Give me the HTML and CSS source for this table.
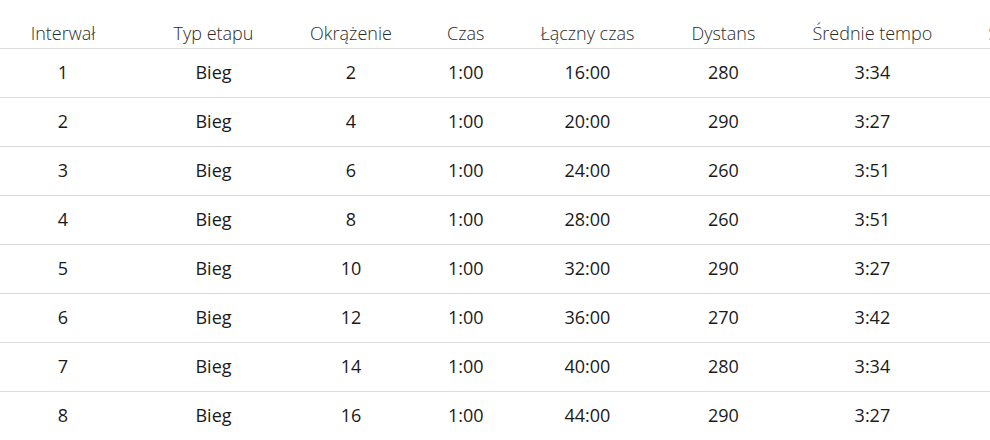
FILE: index.html
```html
<!DOCTYPE html>
<html lang="pl">
<head>
<meta charset="utf-8">
<title>Interwały</title>
<link rel="stylesheet" href="styles.css">
</head>
<body>
<div class="scroller">
<table class="laps">
  <thead>
    <tr>
      <th class="c1">Interwał</th>
      <th class="c2">Typ etapu</th>
      <th class="c3">Okrążenie</th>
      <th class="c4">Czas</th>
      <th class="c5">Łączny czas</th>
      <th class="c6">Dystans</th>
      <th class="c7">Średnie tempo</th>
      <th class="c8">Średnie tętno</th>
    </tr>
  </thead>
  <tbody>
    <tr><td>1</td><td class="type">Bieg</td><td>2</td><td>1:00</td><td>16:00</td><td>280</td><td>3:34</td><td>165</td></tr>
    <tr><td>2</td><td class="type">Bieg</td><td>4</td><td>1:00</td><td>20:00</td><td>290</td><td>3:27</td><td>168</td></tr>
    <tr><td>3</td><td class="type">Bieg</td><td>6</td><td>1:00</td><td>24:00</td><td>260</td><td>3:51</td><td>170</td></tr>
    <tr><td>4</td><td class="type">Bieg</td><td>8</td><td>1:00</td><td>28:00</td><td>260</td><td>3:51</td><td>171</td></tr>
    <tr><td>5</td><td class="type">Bieg</td><td>10</td><td>1:00</td><td>32:00</td><td>290</td><td>3:27</td><td>172</td></tr>
    <tr><td>6</td><td class="type">Bieg</td><td>12</td><td>1:00</td><td>36:00</td><td>270</td><td>3:42</td><td>173</td></tr>
    <tr><td>7</td><td class="type">Bieg</td><td>14</td><td>1:00</td><td>40:00</td><td>280</td><td>3:34</td><td>174</td></tr>
    <tr><td>8</td><td class="type">Bieg</td><td>16</td><td>1:00</td><td>44:00</td><td>290</td><td>3:27</td><td>175</td></tr>
  </tbody>
</table>
</div>
</body>
</html>
```
FILE: styles.css
```css
html, body {
  margin: 0;
  padding: 0;
  background: #ffffff;
}
body {
  font-family: "Open Sans", "Liberation Sans", sans-serif;
  font-size: 18px;
  color: #1a1a1a;
}
.scroller {
  width: 990px;
  height: 440px;
  overflow: hidden;
}
.laps {
  border-collapse: collapse;
  margin-left: -19px;
  width: max-content;
  white-space: nowrap;
}
.laps th,
.laps td {
  box-sizing: border-box;
  text-align: center;
  line-height: 24px;
  padding: 11px 27px 13px;
  border-bottom: 1px solid #dcdcdc;
}
.laps th {
  font-weight: 300;
  color: #2a2a2a;
  padding: 21px 27px 3px;
}
.laps td {
  font-weight: 400;
}
.laps .type {
  font-weight: 500;
}
.c1 { width: 164px; }
.c2 { width: 137px; }
.c3 { width: 138px; }
.c4 { width: 90px; }
.c5 { width: 152px; }
.c6 { width: 120px; }
.c7 { width: 178px; }
```
